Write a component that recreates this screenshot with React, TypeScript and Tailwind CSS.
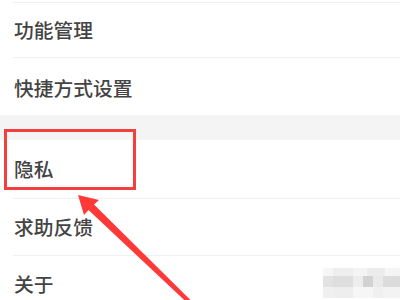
export default function App() {
  const rowText = "text-[19.75px] font-medium text-[#444444] leading-none"
  const font = { fontFamily: '"Noto Sans CJK SC", "Noto Sans", sans-serif' }

  return (
    <div className="relative w-[400px] h-[300px] overflow-hidden bg-white" style={font}>
      {/* settings list */}
      <div className="flex flex-col">
        <div className="h-[2px]" />
        <div className="ml-[13px] h-px bg-[#f0f0f0]" />
        <div className="h-[54px] flex items-center pl-[14px]">
          <span className={rowText}>功能管理</span>
        </div>
        <div className="ml-[13px] h-px bg-[#f0f0f0]" />
        <div className="h-[57px] flex items-center pl-[14px] pt-[3px]">
          <span className={rowText}>快捷方式设置</span>
        </div>
        <div className="h-[25px] bg-[#f4f4f4]" />
        <div className="h-[58px] flex items-center pl-[14px]">
          <span className={rowText}>隐私</span>
        </div>
        <div className="ml-[13px] h-px bg-[#f0f0f0]" />
        <div className="h-[56px] flex items-center pl-[14px]">
          <span className={rowText}>求助反馈</span>
        </div>
        <div className="ml-[13px] h-px bg-[#f0f0f0]" />
        <div className="h-[56px] flex items-center pl-[14px]">
          <span className={rowText}>关于</span>
        </div>
      </div>

      {/* red highlight box */}
      <div className="absolute left-[4px] top-[129px] w-[132px] h-[61px] border-[3px] border-[#f43f3f]" />

      {/* arrow */}
      <svg className="absolute inset-0" width="400" height="300" viewBox="0 0 400 300">
        <polygon
          points="78,195 99,200 94,204.5 191.5,301 188.5,304 88.5,210 84,215"
          fill="#ff3838"
        />
      </svg>

      {/* blurred watermark */}
      <div className="absolute left-[323px] top-[268px] w-[77px] h-[30px] flex flex-col">
        <div className="h-[8px] flex">
          <div className="w-[10px] bg-[#f6f6f6]" />
          <div className="w-[20px] bg-[#eeeeee]" />
          <div className="w-[14px] bg-[#f4f4f4]" />
          <div className="w-[18px] bg-[#ececec]" />
          <div className="flex-1 bg-[#f5f5f5]" />
        </div>
        <div className="h-[11px] flex">
          <div className="w-[10px] bg-[#e2e2e2]" />
          <div className="w-[20px] bg-[#dedede]" />
          <div className="w-[10px] bg-[#ededed]" />
          <div className="w-[10px] bg-[#d2d2d2]" />
          <div className="w-[10px] bg-[#eaeaea]" />
          <div className="flex-1 bg-[#dcdcdc]" />
        </div>
        <div className="h-[11px] flex">
          <div className="w-[10px] bg-[#f0f0f0]" />
          <div className="w-[20px] bg-[#eeeeee]" />
          <div className="w-[20px] bg-[#f6f6f6]" />
          <div className="w-[10px] bg-[#f0f0f0]" />
          <div className="flex-1 bg-[#f3f3f3]" />
        </div>
      </div>
    </div>
  )
}
